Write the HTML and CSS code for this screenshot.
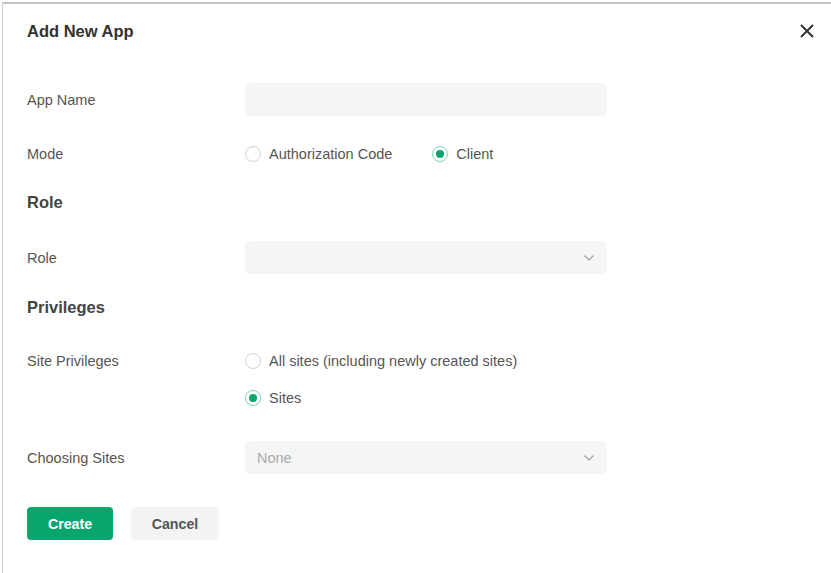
FILE: index.html
```html
<!DOCTYPE html>
<html lang="en">
<head>
    <meta charset="UTF-8">
    <meta name="viewport" content="width=device-width, initial-scale=1.0">
    <title>Add New App</title>
    <link rel="stylesheet" href="styles.css">
</head>
<body>
    <div class="dialog">
        <div class="dialog-header">
            <h2 class="dialog-title">Add New App</h2>
            <button class="close-btn" aria-label="Close">
                <svg width="16" height="16" viewBox="0 0 16 16">
                    <path d="M2 2 L14 14 M14 2 L2 14" stroke="#333" stroke-width="2" fill="none"/>
                </svg>
            </button>
        </div>

        <div class="form-row row-name">
            <label class="form-label">App Name</label>
            <div class="form-field"><input type="text" class="input"></div>
        </div>

        <div class="form-row row-mode">
            <label class="form-label">Mode</label>
            <div class="form-field radios">
                <span class="radio"><span class="dot"></span>Authorization Code</span>
                <span class="radio checked"><span class="dot"></span>Client</span>
            </div>
        </div>

        <h3 class="section role-title">Role</h3>

        <div class="form-row row-role">
            <label class="form-label">Role</label>
            <div class="form-field">
                <div class="select">
                    <span class="placeholder"></span>
                    <svg class="chevron" width="12" height="8" viewBox="0 0 12 8">
                        <path d="M1.5 1.5 L6 6 L10.5 1.5" stroke="#a5a5a5" stroke-width="1.3" fill="none"/>
                    </svg>
                </div>
            </div>
        </div>

        <h3 class="section priv-title">Privileges</h3>

        <div class="form-row row-sites">
            <label class="form-label">Site Privileges</label>
            <div class="form-field radio-stack">
                <span class="radio"><span class="dot"></span>All sites (including newly created sites)</span>
                <span class="radio checked"><span class="dot"></span>Sites</span>
            </div>
        </div>

        <div class="form-row row-choose">
            <label class="form-label">Choosing Sites</label>
            <div class="form-field">
                <div class="select">
                    <span class="placeholder">None</span>
                    <svg class="chevron" width="12" height="8" viewBox="0 0 12 8">
                        <path d="M1.5 1.5 L6 6 L10.5 1.5" stroke="#a5a5a5" stroke-width="1.3" fill="none"/>
                    </svg>
                </div>
            </div>
        </div>

        <div class="actions">
            <button class="btn btn-primary">Create</button>
            <button class="btn btn-default">Cancel</button>
        </div>
    </div>
</body>
</html>
```

FILE: styles.css
```css
html, body {
    margin: 0;
    padding: 0;
    background: #fff;
}
body {
    font-family: "Liberation Sans", Arial, sans-serif;
    color: #555;
    overflow: hidden;
}
.dialog {
    margin: 2px 0 0 2px;
    width: 829px;
    height: 571px;
    box-sizing: border-box;
    border-top: 2px solid #c4c4c4;
    border-left: 1px solid #d0d0d0;
    padding: 0 16px 0 24px;
}
.dialog-header {
    height: 54px;
    display: flex;
    align-items: center;
    justify-content: space-between;
}
.dialog-title {
    margin: 0;
    font-size: 16.5px;
    font-weight: bold;
    color: #333;
}
.close-btn {
    border: none;
    background: none;
    padding: 0;
    width: 16px;
    height: 16px;
    cursor: pointer;
    margin-top: 0;
}
.form-row {
    display: flex;
    align-items: center;
    font-size: 14.5px;
}
.form-label {
    width: 218px;
    flex-shrink: 0;
    color: #555;
}
.form-field {
    width: 362px;
}
.input {
    display: block;
    width: 100%;
    height: 33px;
    box-sizing: border-box;
    border: none;
    border-radius: 5px;
    background: #f4f5f5;
    outline: none;
}
.row-name {
    margin-top: 25px;
}
.row-mode {
    margin-top: 21px;
    height: 33px;
}
.radios {
    display: flex;
    gap: 40px;
}
.radio {
    display: flex;
    align-items: center;
    color: #555;
    height: 24px;
}
.dot {
    width: 14px;
    height: 14px;
    border: 1px solid #d2d2d2;
    border-radius: 50%;
    margin-right: 8px;
    box-sizing: content-box;
    position: relative;
}
.radio.checked .dot {
    border-color: #7cd4b1;
}
.radio.checked .dot::after {
    content: "";
    position: absolute;
    left: 3px;
    top: 3px;
    width: 8px;
    height: 8px;
    border-radius: 50%;
    background: #0aa56d;
}
.section {
    margin: 0;
    font-size: 16.5px;
    font-weight: bold;
    color: #444;
    height: 24px;
    line-height: 24px;
}
.role-title {
    margin-top: 20px;
}
.row-role {
    margin-top: 27px;
}
.select {
    height: 33px;
    border-radius: 5px;
    background: #f4f5f5;
    display: flex;
    align-items: center;
    justify-content: space-between;
    padding: 0 12px;
}
.placeholder {
    color: #aaa;
}
.chevron {
    display: block;
}
.priv-title {
    margin-top: 21px;
}
.row-sites {
    margin-top: 30px;
    align-items: flex-start;
}
.row-sites .form-label {
    line-height: 24px;
}
.radio-stack {
    display: flex;
    flex-direction: column;
    gap: 13px;
}
.row-choose {
    margin-top: 31px;
}
.actions {
    margin-top: 33px;
    display: flex;
    gap: 18px;
}
.btn {
    height: 33px;
    border: none;
    border-radius: 4px;
    font-family: "Liberation Sans", Arial, sans-serif;
    font-size: 14.2px;
    font-weight: bold;
    cursor: pointer;
}
.btn-primary {
    width: 86px;
    background: #0aa56d;
    color: #fff;
}
.btn-default {
    width: 88px;
    background: #f3f3f3;
    color: #555;
}
```
